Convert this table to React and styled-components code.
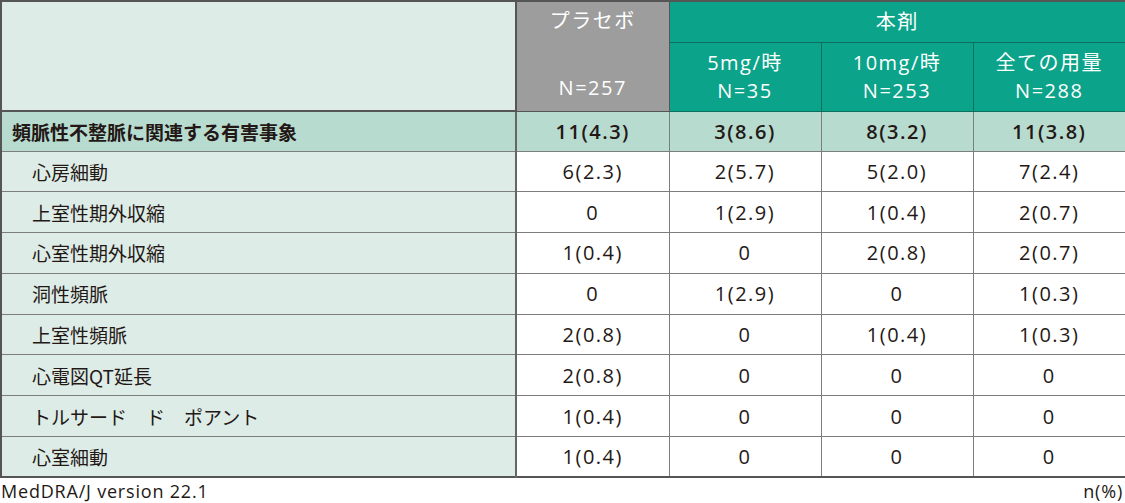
import styled, { createGlobalStyle } from "styled-components";

const GlobalStyle = createGlobalStyle`
  body {
    margin: 0;
    background: #ffffff;
    font-family: "Noto Sans CJK JP", "Noto Sans", sans-serif;
    color: #231815;
  }
`;

const LATIN = `"Open Sans", "Noto Sans CJK JP", sans-serif`;

const Page = styled.div`
  width: 1125px;
`;

const Table = styled.table`
  width: 1125px;
  border-collapse: collapse;
  table-layout: fixed;
  border: 2px solid #555555;
  font-size: 19px;
`;

const HeadCell = styled.th`
  font-family: ${LATIN};
  font-weight: 400;
  font-size: 20px;
  letter-spacing: 1.5px;
  color: #ffffff;
  background: ${(p) => p.$bg};
  border: 1px solid ${(p) => p.$line || "#555555"};
  padding: 0;
  text-align: center;
  line-height: 28px;
  vertical-align: ${(p) => p.$valign || "middle"};
`;

const Corner = styled.th`
  background: #deece7;
  border: 2px solid #555555;
  padding: 0;
`;

const PlaceboStack = styled.div`
  height: 106px;
  display: flex;
  flex-direction: column;
  justify-content: space-between;
  align-items: center;
  padding: 5px 0 6px;
  box-sizing: border-box;
`;

const Row = styled.tr`
  height: ${(p) => (p.$category ? "40px" : "40.8px")};
  background: ${(p) => (p.$category ? "#b8dbd0" : "#ffffff")};
`;

const Label = styled.td`
  background: ${(p) => (p.$category ? "#b8dbd0" : "#deece7")};
  font-weight: ${(p) => (p.$category ? 700 : 400)};
  padding: 0 0 0 ${(p) => (p.$category ? "10px" : "30px")};
  border: 1px solid #7d7d7d;
  border-right: 2px solid #666666;
  white-space: pre;
`;

const Cell = styled.td`
  font-family: ${LATIN};
  font-size: 20px;
  letter-spacing: 1.5px;
  text-align: center;
  padding: 0;
  border: 1px solid #7d7d7d;
  font-weight: ${(p) => (p.$category ? 600 : 400)};
`;

const Footer = styled.div`
  display: flex;
  justify-content: space-between;
  font-family: ${LATIN};
  font-size: 18px;
  letter-spacing: 0.8px;
  line-height: 26px;
  padding: 0 2px 0 1px;
  color: #231815;
`;

const rows = [
  ["心房細動", "6(2.3)", "2(5.7)", "5(2.0)", "7(2.4)"],
  ["上室性期外収縮", "0", "1(2.9)", "1(0.4)", "2(0.7)"],
  ["心室性期外収縮", "1(0.4)", "0", "2(0.8)", "2(0.7)"],
  ["洞性頻脈", "0", "1(2.9)", "0", "1(0.3)"],
  ["上室性頻脈", "2(0.8)", "0", "1(0.4)", "1(0.3)"],
  ["心電図QT延長", "2(0.8)", "0", "0", "0"],
  ["トルサード　ド　ポアント", "1(0.4)", "0", "0", "0"],
  ["心室細動", "1(0.4)", "0", "0", "0"],
];

const GREEN = "#0ba38a";
const GREEN_LINE = "#0a6f5e";

export default function App() {
  return (
    <Page>
      <GlobalStyle />
      <Table>
        <colgroup>
          <col style={{ width: 515 }} />
          <col style={{ width: 153 }} />
          <col style={{ width: 152 }} />
          <col style={{ width: 152 }} />
          <col style={{ width: 153 }} />
        </colgroup>
        <thead>
          <tr style={{ height: 41 }}>
            <Corner rowSpan={2} />
            <HeadCell rowSpan={2} $bg="#9d9d9d" $valign="top">
              <PlaceboStack>
                <span>プラセボ</span>
                <span>N=257</span>
              </PlaceboStack>
            </HeadCell>
            <HeadCell colSpan={3} $bg={GREEN} $line={GREEN_LINE}>
              本剤
            </HeadCell>
          </tr>
          <tr style={{ height: 69 }}>
            <HeadCell $bg={GREEN} $line={GREEN_LINE}>
              5mg/時
              <br />
              N=35
            </HeadCell>
            <HeadCell $bg={GREEN} $line={GREEN_LINE}>
              10mg/時
              <br />
              N=253
            </HeadCell>
            <HeadCell $bg={GREEN} $line={GREEN_LINE}>
              全ての用量
              <br />
              N=288
            </HeadCell>
          </tr>
        </thead>
        <tbody>
          <Row $category>
            <Label $category>頻脈性不整脈に関連する有害事象</Label>
            <Cell $category>11(4.3)</Cell>
            <Cell $category>3(8.6)</Cell>
            <Cell $category>8(3.2)</Cell>
            <Cell $category>11(3.8)</Cell>
          </Row>
          {rows.map(([name, ...vals]) => (
            <Row key={name}>
              <Label>{name}</Label>
              {vals.map((v, i) => (
                <Cell key={i}>{v}</Cell>
              ))}
            </Row>
          ))}
        </tbody>
      </Table>
      <Footer>
        <span>MedDRA/J version 22.1</span>
        <span>n(%)</span>
      </Footer>
    </Page>
  );
}
